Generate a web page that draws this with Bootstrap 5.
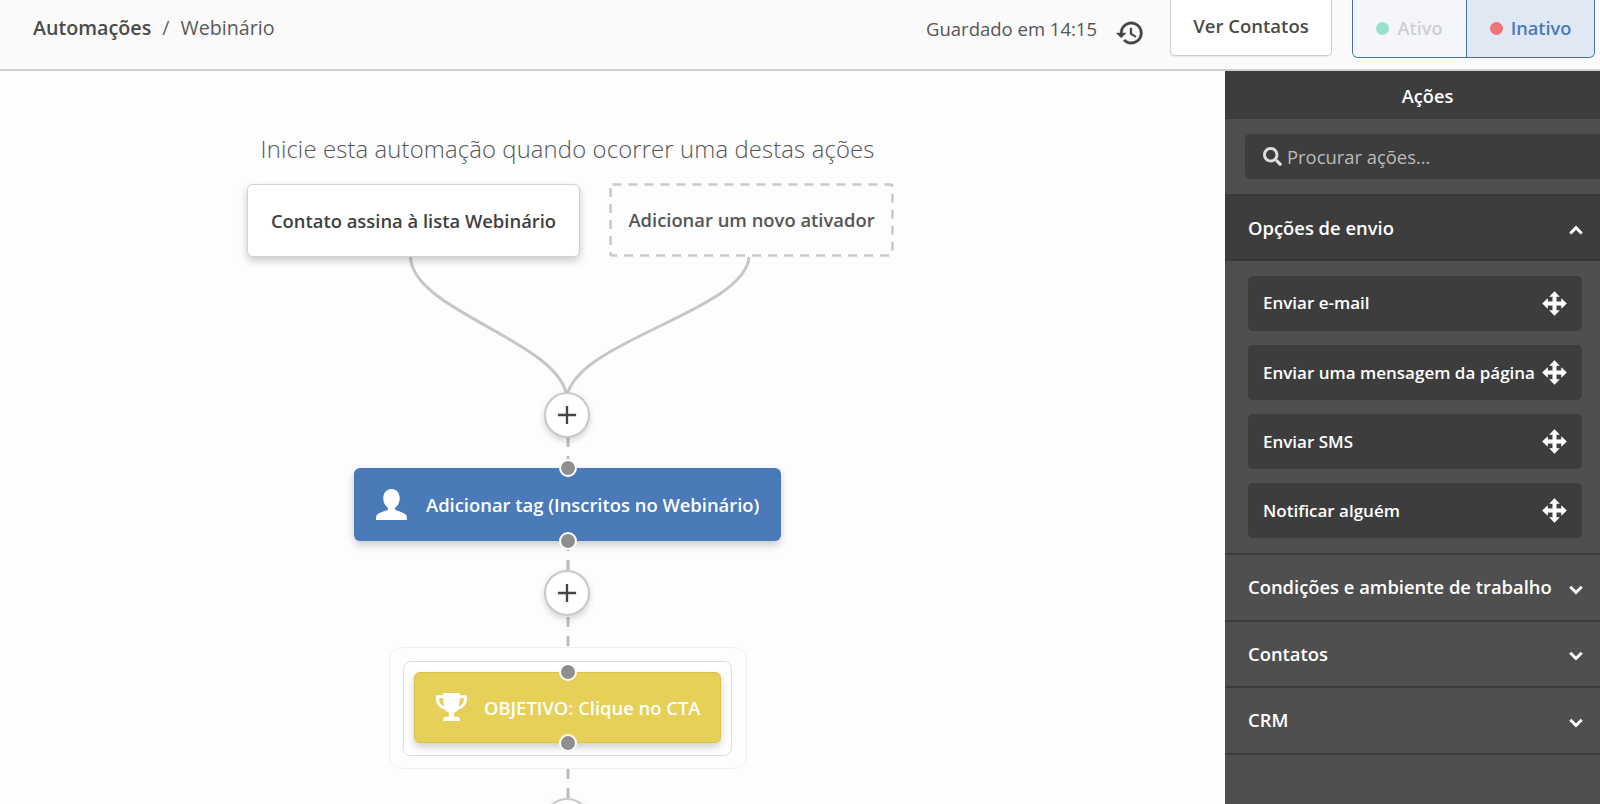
<!DOCTYPE html>
<html lang="pt">
<head>
<meta charset="utf-8">
<title>Automações</title>
<link href="https://cdn.jsdelivr.net/npm/bootstrap@5.3.0/dist/css/bootstrap.min.css" rel="stylesheet">
<style>
html,body{height:100%;overflow:hidden}
body{font-family:"Open Sans","Noto Sans",sans-serif;background:#fdfdfd;color:#444}
.topbar{height:71px;background:#fafafa;border-bottom:2px solid #cfcfcf;padding-left:33px}
.crumb-main{font-size:19.7px;font-weight:600;color:#4a4a4a}
.crumb-sep{font-size:19.7px;color:#666;margin:0 11px}
.crumb-sub{font-size:19.7px;color:#5a5a5a}
.saved{font-size:18.5px;color:#555;margin-right:18px;margin-top:-12px}
.hist{width:30px;height:30px;fill:#444;stroke:#444;stroke-width:.3;margin-right:25px;margin-top:-3px}
.see-btn{width:162px;height:56px;background:#fff;border:1px solid #ccc;border-top:0;border-radius:0 0 5px 5px;font-size:18.5px;font-weight:600;color:#4a4a4a;padding:0 0 3px;box-shadow:0 1px 1px rgba(0,0,0,.08)}
.toggle-wrap{width:243px;height:58px;margin:0 5px 12px 20px;border:1px solid #4472ad;border-top:0;border-radius:0 0 6px 6px;overflow:hidden}
.tog{font-size:18.2px;font-weight:600;gap:8px}
.tog-on{width:114px;background:#f4f6fa;color:#cfcfcf;border-right:1px solid #4472ad}
.tog-off{flex:1;background:#e0e8f4;color:#4a7ab8}
.tog-dot{width:13px;height:13px;border-radius:50%}
.dot-g{background:#9adfca}.dot-r{background:#ee7575}
.workspace{height:733px}
.canvas{width:1225px;background:#fdfdfd}
.sidebar{width:375px;background:#4f4f4f;color:#fff}
.side-title{height:48px;background:#3d3d3d;font-size:18.2px;font-weight:600;padding:3px 0 0 30px}
.search-zone{height:77px;padding:15px 0 0 20px;border-bottom:2px solid #3a3a3a}
.search-box{height:45px;background:#3d3d3d;border-radius:5px 0 0 5px;padding-left:18px;font-size:18.4px;color:#bbb;gap:5px}
.search-box svg{width:19px;height:19px;fill:#ddd}
.sec-head{height:66.5px;padding:0 16px 0 23px;font-size:18.4px;font-weight:600;border-bottom:2px solid #3a3a3a}
.sec-head.open{background:#3d3d3d;height:65px;border-bottom-color:#383838}
.chev{width:16px;height:16px;fill:none;stroke:#fff;stroke-width:2.6;margin-top:3px}
.open .chev{margin-top:5px}
.sec-body{padding:14.5px 18px 14px 23px;gap:14.3px;border-bottom:2px solid #3a3a3a;height:294px}
.act{height:55px;background:#3d3d3d;border-radius:5px;padding:0 15px 0 15px;font-size:17px;font-weight:600;white-space:nowrap}
.act svg{width:25px;height:25px;fill:#fff;stroke:#fff;stroke-width:.6;stroke-linejoin:round;flex:none}
.node{position:absolute}
.lead-text{left:0;width:1135px;top:61px;text-align:center;font-size:23.8px;font-weight:300;color:#555;letter-spacing:.15px}
.wire{left:0;top:0;width:1225px;height:733px}
.trig{height:73px;font-size:18.4px;font-weight:600}
.trig-a{left:247px;top:113px;width:333px;background:#fff;border:1px solid #d2d2d2;border-radius:6px;color:#3f3f3f;box-shadow:0 4px 9px rgba(0,0,0,.2)}
.trig-b{left:609px;top:112px;width:285px;height:74px;color:#555}
.dash-frame{width:285px;height:74px;fill:none;stroke:#c9c9c9;stroke-width:2.5;stroke-dasharray:9 7}
.plus{left:544px;width:46px;height:46px;border-radius:50%;background:#fff;border:2px solid #c8c8c8;box-shadow:0 3px 6px rgba(0,0,0,.16)}
.plus svg{width:20px;height:20px;stroke:#444;stroke-width:2.6;fill:none}
.p1{top:321px}.p2{top:499px}.p3{top:727px}
.step{color:#fff;font-size:18.4px;font-weight:600;border-radius:6px;box-shadow:0 4px 8px rgba(0,0,0,.2)}
.step-blue{left:354px;top:397px;width:427px;height:73px;background:#4a7ab8;padding-left:21px}
.step-blue svg{width:33px;height:33px;fill:#fff;margin-right:18px}
.goal-out{left:389px;top:576px;width:358px;height:122px;border:1px solid #f0f0f0;border-radius:12px;background:#fdfdfd}
.goal-in{left:403px;top:590px;width:329px;height:95px;border:1px solid #dcdcdc;border-radius:8px;background:#fff}
.step-yellow{left:414px;top:601px;width:307px;height:71px;background:#e6d057;border:1px solid #d8c14a;padding-left:20px}
.step-yellow svg{width:33px;height:33px;fill:#fff;margin-right:16px}
.pin{width:18px;height:18px;border-radius:50%;background:#8f8f8f;border:2px solid #fff;left:559px}
.pa{top:388px}.pb{top:461px}.pc{top:592px}.pd{top:663px}
</style>
</head>
<body>
<header class="topbar d-flex align-items-center">
  <div class="flex-grow-1 d-flex align-items-center" style="margin-top:-13px">
    <span class="crumb-main">Automações</span><span class="crumb-sep">/</span><span class="crumb-sub">Webinário</span>
  </div>
  <span class="saved">Guardado em 14:15</span>
  <svg class="hist" viewBox="0 0 24 24"><path d="M13 3c-4.970 0-9 4.030-9 9H1l3.890 3.890.07.14L9 12H6c0-3.870 3.130-7 7-7s7 3.130 7 7-3.130 7-7 7c-1.930 0-3.680-.79-4.940-2.060l-1.420 1.420C8.270 19.990 10.510 21 13 21c4.970 0 9-4.030 9-9s-4.030-9-9-9zm-1 5v5l4.280 2.540.72-1.210-3.500-2.080V8H12z"/></svg>
  <button type="button" class="btn see-btn align-self-start">Ver Contatos</button>
  <div class="toggle-wrap d-flex align-self-start">
    <div class="tog tog-on d-flex align-items-center justify-content-center"><i class="tog-dot dot-g"></i>Ativo</div>
    <div class="tog tog-off d-flex align-items-center justify-content-center"><i class="tog-dot dot-r"></i>Inativo</div>
  </div>
</header>
<main class="workspace d-flex">
  <section class="canvas position-relative">
    <svg class="node wire" viewBox="0 0 1225 733" fill="none">
      <path d="M410.500 186C412 240 560 270 567 326" stroke="#c6c6c6" stroke-width="3"/>
      <path d="M749 186C745 240 575 270 567 326" stroke="#c6c6c6" stroke-width="3"/>
      <path d="M568 366V398M568 470V500M568 546V577M568 698V727" stroke="#bdbdbd" stroke-width="3" stroke-dasharray="10 9"/>
    </svg>
    <div class="node lead-text">Inicie esta automação quando ocorrer uma destas ações</div>
    <div class="node trig trig-a d-flex align-items-center justify-content-center">Contato assina à lista Webinário</div>
    <div class="node trig trig-b d-flex align-items-center justify-content-center">
      <svg class="dash-frame position-absolute top-0 start-0" viewBox="0 0 285 74"><rect x="1.500" y="1.500" width="282" height="71" rx="2"/></svg>
      Adicionar um novo ativador
    </div>
    <div class="node plus p1 d-flex align-items-center justify-content-center"><svg viewBox="0 0 22 22"><path d="M11 1v20M1 11h20"/></svg></div>
    <div class="node step step-blue d-flex align-items-center">
      <svg viewBox="0 0 32 32"><path d="M16 1c-5 0-8 4-8 9 0 4 2 7.500 4.500 9.200v1.800c-2 1-9.500 3-11 5.500C1 28.500 1 31 1 31h30s0-2.500-.5-4.500c-1.500-2.500-9-4.500-11-5.500v-1.800C22 17.500 24 14 24 10c0-5-3-9-8-9z"/></svg>
      Adicionar tag (Inscritos no Webinário)
    </div>
    <div class="node pin pa"></div>
    <div class="node pin pb"></div>
    <div class="node plus p2 d-flex align-items-center justify-content-center"><svg viewBox="0 0 22 22"><path d="M11 1v20M1 11h20"/></svg></div>
    <div class="node goal-out"></div>
    <div class="node goal-in"></div>
    <div class="node step step-yellow d-flex align-items-center">
      <svg viewBox="0 0 32 32"><path d="M8 2h16v2h7v4c0 5-4 9-8.500 10-1 1.500-2.500 2.500-4 3v4h3c1.500 0 2.500 1 2.500 2.500V29H8v-1.500C8 26 9 25 10.500 25h3v-4c-1.500-.5-3-1.500-4-3C5 17 1 13 1 8V4h7V2zM4 7v1c0 3 2 6 5 7-.6-2.500-1-5-1-8H4zm24 0h-4c0 3-.4 5.500-1 8 3-1 5-4 5-7V7z"/></svg>
      OBJETIVO: Clique no CTA
    </div>
    <div class="node pin pc"></div>
    <div class="node pin pd"></div>
    <div class="node plus p3"></div>
  </section>
  <aside class="sidebar d-flex flex-column">
    <div class="side-title d-flex align-items-center justify-content-center">Ações</div>
    <div class="search-zone"><div class="search-box d-flex align-items-center">
      <svg viewBox="0 0 512 512"><path d="M505 442.700L405.300 343c-4.500-4.500-10.600-7-17-7H372c27.600-35.300 44-79.700 44-128C416 93.100 322.900 0 208 0S0 93.100 0 208s93.100 208 208 208c48.300 0 92.700-16.400 128-44v16.300c0 6.400 2.500 12.500 7 17l99.700 99.700c9.400 9.400 24.600 9.400 33.900 0l28.300-28.300c9.400-9.400 9.400-24.600.1-34zM208 336c-70.700 0-128-57.200-128-128 0-70.700 57.200-128 128-128 70.700 0 128 57.200 128 128 0 70.700-57.200 128-128 128z"/></svg>
      <span>Procurar ações...</span></div></div>
    <div class="sec-head open d-flex align-items-center justify-content-between"><span>Opções de envio</span><svg class="chev" viewBox="0 0 14 14"><path d="M2 10l5-5 5 5"/></svg></div>
    <div class="sec-body d-flex flex-column">
      <div class="act d-flex align-items-center justify-content-between">Enviar e-mail<svg viewBox="0 0 24 24"><use href="#mv"/></svg></div>
      <div class="act d-flex align-items-center justify-content-between">Enviar uma mensagem da página<svg viewBox="0 0 24 24"><use href="#mv"/></svg></div>
      <div class="act d-flex align-items-center justify-content-between">Enviar SMS<svg viewBox="0 0 24 24"><use href="#mv"/></svg></div>
      <div class="act d-flex align-items-center justify-content-between">Notificar alguém<svg viewBox="0 0 24 24"><use href="#mv"/></svg></div>
    </div>
    <div class="sec-head d-flex align-items-center justify-content-between"><span>Condições e ambiente de trabalho</span><svg class="chev" viewBox="0 0 14 14"><path d="M2 5l5 5 5-5"/></svg></div>
    <div class="sec-head d-flex align-items-center justify-content-between"><span>Contatos</span><svg class="chev" viewBox="0 0 14 14"><path d="M2 5l5 5 5-5"/></svg></div>
    <div class="sec-head d-flex align-items-center justify-content-between"><span>CRM</span><svg class="chev" viewBox="0 0 14 14"><path d="M2 5l5 5 5-5"/></svg></div>
  </aside>
</main>
<svg width="0" height="0" class="position-absolute"><defs><path id="mv" d="M12 .5l4.500 4.800h-2.900v5.100h5.100V7.500L23.500 12l-4.800 4.500v-2.900h-5.100v5.100h2.900L12 23.500l-4.500-4.800h2.900v-5.100H5.300v2.900L.5 12l4.800-4.500v2.900h5.100V5.300H7.500z"/></defs></svg>
<script src="https://cdn.jsdelivr.net/npm/bootstrap@5.3.0/dist/js/bootstrap.bundle.min.js"></script>
</body>
</html>
